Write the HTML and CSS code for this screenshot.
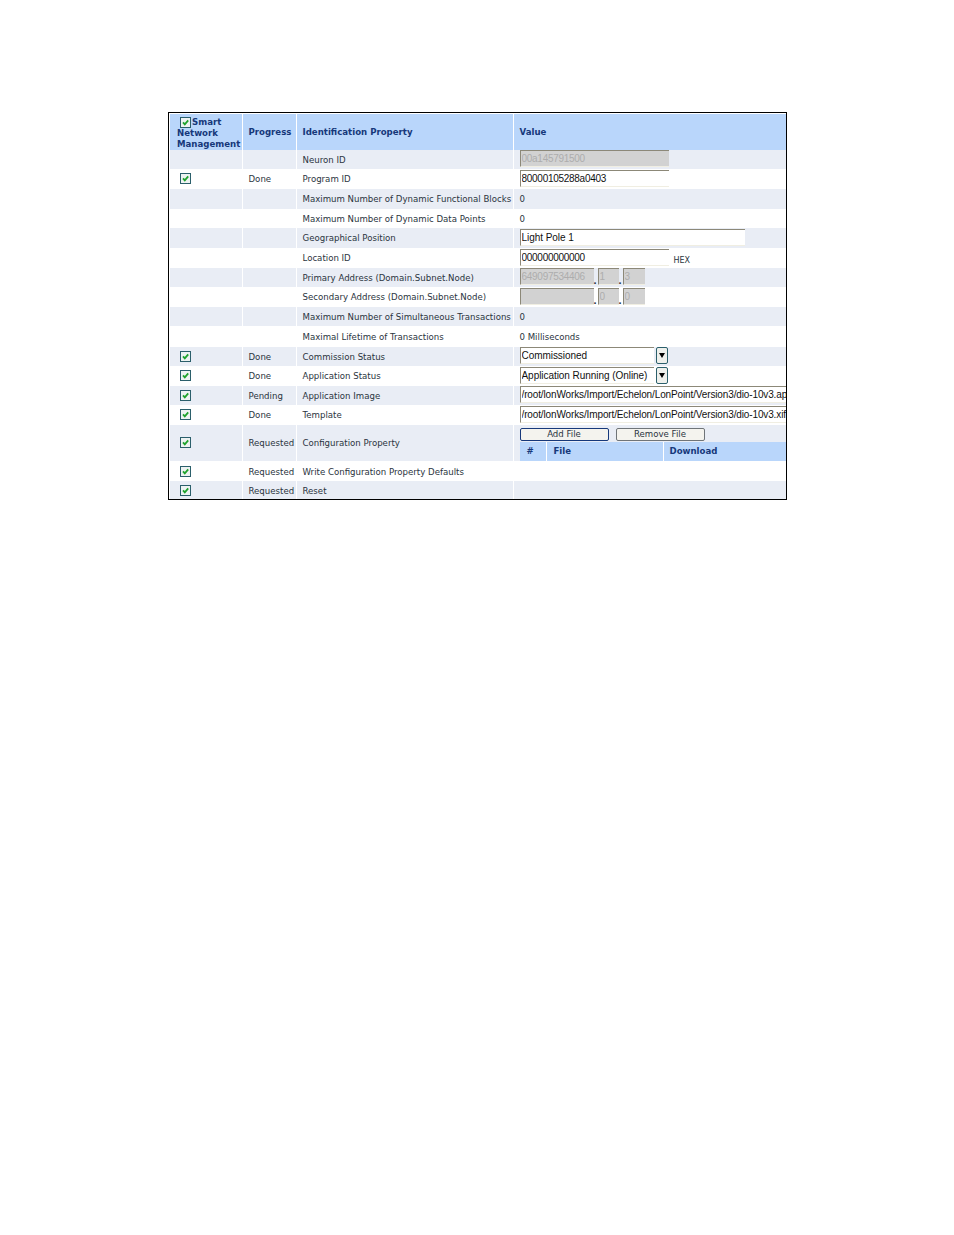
FILE: index.html
```html
<!DOCTYPE html>
<html lang="en">
<head>
  <meta charset="UTF-8">
  <title>Smart Network Management</title>
  <link rel="stylesheet" href="styles.css">
</head>
<body>
  <svg class="defs" width="0" height="0">
    <symbol id="check" viewBox="0 0 11 11">
      <rect x="0.5" y="0.5" width="10" height="10" fill="#eef3f2" stroke="#2b5f6b"/>
      <path d="M3 5.4 L4.8 7.4 L8.2 3.4" fill="none" stroke="#1fa32c" stroke-width="1.8"/>
    </symbol>
  </svg>
  <div class="frame">
    <table class="grid">
      <colgroup>
        <col class="col-smart">
        <col class="col-progress">
        <col class="col-prop">
        <col class="col-value">
      </colgroup>
      <thead>
        <tr>
          <th class="smart"><span class="smart-first"><svg class="box"><use href="#check"/></svg>Smart</span>Network<br>Management</th>
          <th>Progress</th>
          <th>Identification Property</th>
          <th>Value</th>
        </tr>
      </thead>
      <tbody>
        <tr class="odd h19">
          <td></td><td></td><td>Neuron ID</td>
          <td><input class="field num w149" disabled value="00a145791500"></td>
        </tr>
        <tr class="h20">
          <td class="chk"><svg class="box"><use href="#check"/></svg></td><td>Done</td><td>Program ID</td>
          <td><input class="field num w149" value="80000105288a0403"></td>
        </tr>
        <tr class="odd h20">
          <td></td><td></td><td>Maximum Number of Dynamic Functional Blocks</td><td>0</td>
        </tr>
        <tr class="h19">
          <td></td><td></td><td>Maximum Number of Dynamic Data Points</td><td>0</td>
        </tr>
        <tr class="odd h20">
          <td></td><td></td><td>Geographical Position</td>
          <td><input class="field w225" value="Light Pole 1"></td>
        </tr>
        <tr class="h20">
          <td></td><td></td><td>Location ID</td>
          <td><input class="field num w149" value="000000000000"><span class="unit">HEX</span></td>
        </tr>
        <tr class="odd h19">
          <td></td><td></td><td>Primary Address (Domain.Subnet.Node)</td>
          <td class="addr"><input class="field num w74" disabled value="649097534406"><span class="dot">.</span><input class="field w21" disabled value="1"><span class="dot">.</span><input class="field w22" disabled value="3"></td>
        </tr>
        <tr class="h20">
          <td></td><td></td><td>Secondary Address (Domain.Subnet.Node)</td>
          <td class="addr"><input class="field w74" disabled value=""><span class="dot">.</span><input class="field w21" disabled value="0"><span class="dot">.</span><input class="field w22" disabled value="0"></td>
        </tr>
        <tr class="odd h19">
          <td></td><td></td><td>Maximum Number of Simultaneous Transactions</td><td>0</td>
        </tr>
        <tr class="h21">
          <td></td><td></td><td>Maximal Lifetime of Transactions</td><td>0 Milliseconds</td>
        </tr>
        <tr class="odd h19">
          <td class="chk"><svg class="box"><use href="#check"/></svg></td><td>Done</td><td>Commission Status</td>
          <td class="pick"><input class="field w134" value="Commissioned"><span class="arrow"></span></td>
        </tr>
        <tr class="h20">
          <td class="chk"><svg class="box"><use href="#check"/></svg></td><td>Done</td><td>Application Status</td>
          <td class="pick"><input class="field w134" value="Application Running (Online)"><span class="arrow"></span></td>
        </tr>
        <tr class="odd h19">
          <td class="chk"><svg class="box"><use href="#check"/></svg></td><td>Pending</td><td>Application Image</td>
          <td class="clip"><input class="field path" value="/root/lonWorks/Import/Echelon/LonPoint/Version3/dio-10v3.apb"></td>
        </tr>
        <tr class="h20">
          <td class="chk"><svg class="box"><use href="#check"/></svg></td><td>Done</td><td>Template</td>
          <td class="clip"><input class="field path" value="/root/lonWorks/Import/Echelon/LonPoint/Version3/dio-10v3.xif"></td>
        </tr>
        <tr class="odd h36">
          <td class="chk"><svg class="box"><use href="#check"/></svg></td><td>Requested</td><td>Configuration Property</td>
          <td class="files">
            <div class="file-btns">
              <button class="btn btn-on">Add File</button>
              <button class="btn">Remove File</button>
            </div>
            <div class="file-head">
              <span class="fh-num">#</span>
              <span class="fh-file">File</span>
              <span class="fh-dl">Download</span>
            </div>
          </td>
        </tr>
        <tr class="h20 low">
          <td class="chk"><svg class="box"><use href="#check"/></svg></td><td>Requested</td><td>Write Configuration Property Defaults</td><td class="nosep"></td>
        </tr>
        <tr class="odd h18 low">
          <td class="chk"><svg class="box"><use href="#check"/></svg></td><td>Requested</td><td>Reset</td><td></td>
        </tr>
      </tbody>
    </table>
  </div>
</body>
</html>
```

FILE: styles.css
```css
body {
  margin: 0;
  background-color: #fff;
  font-family: "DejaVu Sans", Verdana, sans-serif;
  font-size: 8.6px;
  color: #2a3440;
}
.defs {
  display: block;
  height: 0;
}
.frame {
  width: 619px;
  height: 388px;
  margin: 112px 0 0 168px;
  box-sizing: border-box;
  border: 1px solid #000;
  padding: 1px 0 0 1px;
  overflow: hidden;
}
.grid {
  width: 617px;
  table-layout: fixed;
  border-collapse: collapse;
}
.col-smart {
  width: 72px;
}
.col-progress {
  width: 54px;
}
.col-prop {
  width: 217px;
}
.col-value {
  width: 274px;
}
th {
  height: 36px;
  padding: 0 0 0 6px;
  background-color: #b9d6fb;
  border-left: 1px solid #fff;
  color: #16387a;
  font-size: 8.6px;
  font-weight: bold;
  text-align: left;
  box-sizing: border-box;
}
th:first-child {
  border-left: none;
}
th.smart {
  padding: 2px 0 0 7px;
  line-height: 11px;
}
.smart-first {
  display: flex;
  height: 11px;
  padding-left: 3px;
  gap: 1px;
}
td {
  padding: 0 0 0 6px;
  border-left: 1px solid #fff;
  white-space: nowrap;
  overflow: hidden;
  box-sizing: border-box;
}
td:first-child {
  border-left: none;
}
.odd td {
  background-color: #e9edf5;
}
.h18 td { height: 18px; }
.h19 td { height: 19px; }
.h20 td { height: 20px; }
.h21 td { height: 21px; }
.h36 td { height: 36px; }
.low td {
  padding-top: 2px;
}
td.chk {
  padding-left: 10px;
}
td.nosep {
  border-left: none;
}
.box {
  flex: none;
  width: 11px;
  height: 11px;
}
td .box {
  display: block;
  margin-top: -1px;
}
.field {
  height: 17px;
  margin: 0 0 2px;
  padding: 0 0 0 1px;
  box-sizing: border-box;
  border-width: 1px 0 1px 1px;
  border-style: solid;
  border-color: #8c8878 #f0eee2 #f0eee2 #8c8878;
  background-color: #fff;
  font-family: "Liberation Sans", Arial, sans-serif;
  font-size: 10px;
  letter-spacing: -0.05px;
  color: #111;
  vertical-align: middle;
}
.field.num {
  letter-spacing: -0.28px;
}
.field.path {
  width: 290px;
  letter-spacing: -0.13px;
}
.field:disabled {
  background-color: #d2d2d2;
  color: #adadad;
}
.w149 { width: 149px; }
.w225 { width: 225px; }
.w74 { width: 74px; }
.w21 { width: 21px; }
.w22 { width: 22px; }
.w134 { width: 134px; }
.unit {
  margin-left: 5px;
  font-size: 8px;
  position: relative;
  top: 2px;
}
.dot {
  display: inline-block;
  width: 4px;
  font-family: "Liberation Sans", Arial, sans-serif;
  font-size: 11px;
  font-weight: bold;
  vertical-align: -4px;
  line-height: 1;
}
.pick .arrow {
  display: inline-block;
  position: relative;
  width: 12px;
  height: 17px;
  margin: 0 0 2px 2px;
  box-sizing: border-box;
  border: 1px solid #2b5f6b;
  border-radius: 2px;
  background-color: #eef0ec;
  vertical-align: middle;
}
.pick .arrow::after {
  content: "";
  position: absolute;
  left: 2px;
  top: 5px;
  border-left: 3px solid transparent;
  border-right: 3px solid transparent;
  border-top: 5px solid #000;
}
.clip {
  padding-right: 0;
}
td.files {
  vertical-align: top;
  padding-top: 3px;
}
.file-btns {
  display: flex;
  gap: 7px;
  height: 13px;
}
.btn {
  width: 89px;
  height: 13px;
  padding: 0;
  box-sizing: border-box;
  border: 1px solid #6f7478;
  border-radius: 2px;
  background-color: #f4f3ee;
  font-family: "DejaVu Sans", Verdana, sans-serif;
  font-size: 8.6px;
  line-height: 11px;
  color: #2a3440;
}
.btn-on {
  border-color: #16387a;
}
.file-head {
  display: flex;
  height: 19px;
  margin-top: 1px;
  background-color: #b9d6fb;
  color: #16387a;
  font-weight: bold;
  line-height: 19px;
}
.fh-num {
  width: 27px;
  padding-left: 7px;
  box-sizing: border-box;
  border-right: 1px solid #fff;
}
.fh-file {
  width: 117px;
  padding-left: 7px;
  box-sizing: border-box;
  border-right: 1px solid #fff;
}
.fh-dl {
  padding-left: 6px;
}
```
